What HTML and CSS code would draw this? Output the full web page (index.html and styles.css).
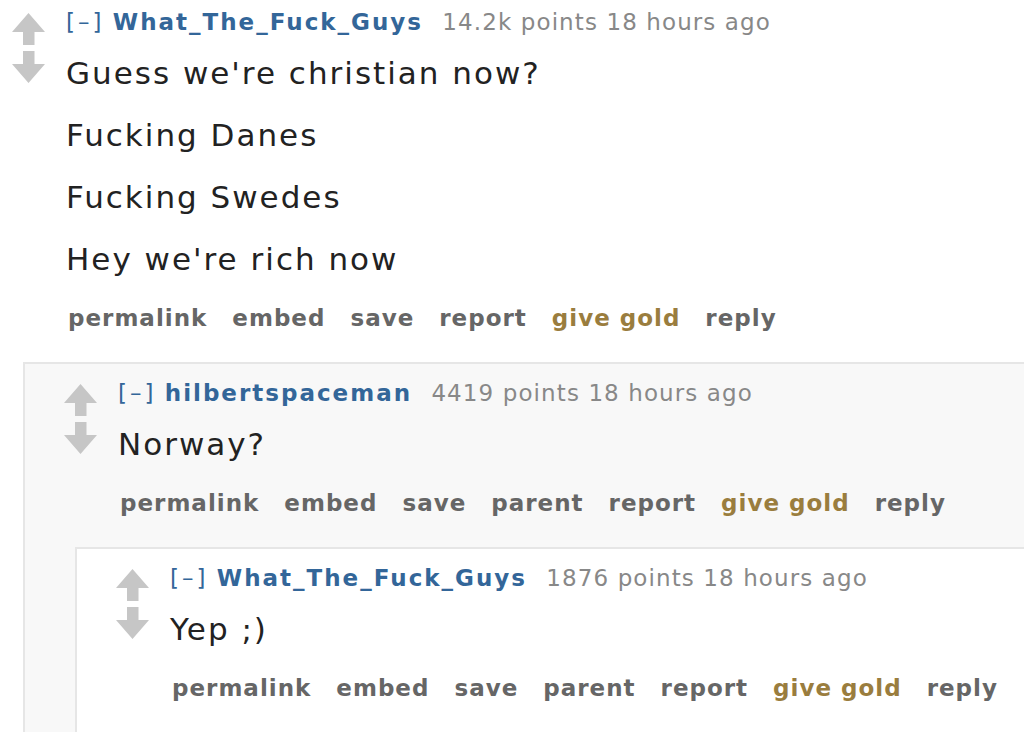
FILE: index.html
```html
<!DOCTYPE html>
<html>
<head>
    <title>Comments</title>
    <link rel="stylesheet" href="styles.css">
</head>
<body>
    <div class="thread">
        <div class="comment top">
            <div class="votes">
                <svg class="arrows" width="34" height="70" viewBox="0 0 34 70">
                    <path d="M16.5 0 L33 19 L22.5 19 L22.5 32 L11 32 L11 19 L0 19 Z"/>
                    <path d="M11 38 L22.5 38 L22.5 51 L33 51 L16.5 70 L0 51 L11 51 Z"/>
                </svg>
            </div>
            <div class="entry">
                <p class="tagline"><a class="expand">[–]</a> <a class="author">What_The_Fuck_Guys</a> <span class="score">14.2k points 18 hours ago</span></p>
                <div class="md">
                    <p>Guess we're christian now?</p>
                    <p>Fucking Danes</p>
                    <p>Fucking Swedes</p>
                    <p>Hey we're rich now</p>
                </div>
                <ul class="buttons">
                    <li><a>permalink</a></li>
                    <li><a>embed</a></li>
                    <li><a>save</a></li>
                    <li><a>report</a></li>
                    <li><a class="gold">give gold</a></li>
                    <li><a>reply</a></li>
                </ul>

                <div class="child odd">
                    <div class="comment">
                        <div class="votes">
                            <svg class="arrows" width="34" height="70" viewBox="0 0 34 70">
                                <path d="M16.5 0 L33 19 L22.5 19 L22.5 32 L11 32 L11 19 L0 19 Z"/>
                                <path d="M11 38 L22.5 38 L22.5 51 L33 51 L16.5 70 L0 51 L11 51 Z"/>
                            </svg>
                        </div>
                        <div class="entry">
                            <p class="tagline"><a class="expand">[–]</a> <a class="author">hilbertspaceman</a> <span class="score">4419 points 18 hours ago</span></p>
                            <div class="md">
                                <p>Norway?</p>
                            </div>
                            <ul class="buttons">
                                <li><a>permalink</a></li>
                                <li><a>embed</a></li>
                                <li><a>save</a></li>
                                <li><a>parent</a></li>
                                <li><a>report</a></li>
                                <li><a class="gold">give gold</a></li>
                                <li><a>reply</a></li>
                            </ul>

                            <div class="child even">
                                <div class="comment">
                                    <div class="votes">
                                        <svg class="arrows" width="34" height="70" viewBox="0 0 34 70">
                                            <path d="M16.5 0 L33 19 L22.5 19 L22.5 32 L11 32 L11 19 L0 19 Z"/>
                                            <path d="M11 38 L22.5 38 L22.5 51 L33 51 L16.5 70 L0 51 L11 51 Z"/>
                                        </svg>
                                    </div>
                                    <div class="entry">
                                        <p class="tagline"><a class="expand">[–]</a> <a class="author">What_The_Fuck_Guys</a> <span class="score">1876 points 18 hours ago</span></p>
                                        <div class="md">
                                            <p>Yep ;)</p>
                                        </div>
                                        <ul class="buttons">
                                            <li><a>permalink</a></li>
                                            <li><a>embed</a></li>
                                            <li><a>save</a></li>
                                            <li><a>parent</a></li>
                                            <li><a>report</a></li>
                                            <li><a class="gold">give gold</a></li>
                                            <li><a>reply</a></li>
                                        </ul>
                                    </div>
                                </div>
                            </div>
                        </div>
                    </div>
                </div>
            </div>
        </div>
    </div>
</body>
</html>
```

FILE: styles.css
```css
html, body {
    margin: 0;
    padding: 0;
    background-color: #fff;
    overflow: hidden;
}

body {
    width: 1024px;
    height: 732px;
    font-family: "DejaVu Sans", Verdana, sans-serif;
    color: #222;
}

.thread {
    padding: 7px 0 0 12px;
}

.comment {
    display: flex;
    align-items: flex-start;
}

.votes {
    width: 54px;
    flex-shrink: 0;
    padding-top: 6px;
}

.arrows {
    display: block;
    fill: #c6c6c6;
}

.entry {
    flex: 1;
    min-width: 0;
}

.tagline {
    margin: 0;
    font-size: 23px;
    line-height: 30px;
    white-space: nowrap;
}

.tagline .expand {
    color: #369;
    letter-spacing: 3px;
    margin-right: 1px;
}

.tagline .author {
    color: #369;
    font-weight: bold;
    letter-spacing: 2px;
    margin-right: 12px;
}

.tagline .score {
    color: #888;
    letter-spacing: 1.1px;
}

.md {
    margin-top: 14px;
}

.md p {
    margin: 0 0 18px;
    font-size: 31px;
    line-height: 44px;
    letter-spacing: 2px;
}

.md p:last-child {
    margin-bottom: 0;
}

.buttons {
    list-style: none;
    margin: 22px 0 0;
    padding: 0 0 0 2px;
    display: flex;
    gap: 25px;
    font-size: 23px;
    line-height: 30px;
    font-weight: bold;
    letter-spacing: 1px;
    white-space: nowrap;
}

.buttons a {
    color: #666;
}

.buttons a.gold {
    color: #9a7d3e;
}

.child {
    margin: 29px -200px 0 -43px;
    padding: 14px 0 0 39px;
    border-top: 2px solid #e6e6e6;
    border-left: 2px solid #e6e6e6;
}

.child.odd {
    background-color: #f8f8f8;
}

.child.even {
    background-color: #fff;
    padding-bottom: 200px;
}
```
